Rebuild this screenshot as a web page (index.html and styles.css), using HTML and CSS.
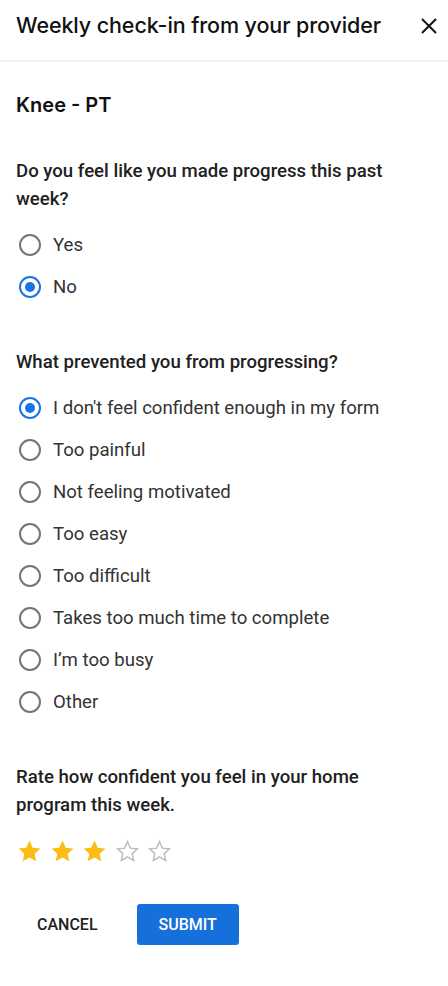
FILE: index.html
```html
<!DOCTYPE html>
<html lang="en">
<head>
    <meta charset="UTF-8">
    <meta name="viewport" content="width=device-width, initial-scale=1.0">
    <title>Weekly check-in</title>
    <link rel="stylesheet" href="styles.css">
</head>
<body>
    <div class="dialog">
        <div class="dialog-header">
            <h1 class="dialog-title">Weekly check-in from your provider</h1>
            <button class="close-button" aria-label="Close">
                <svg width="18" height="18" viewBox="0 0 18 18">
                    <path d="M2 2L16 16M16 2L2 16" stroke="#111" stroke-width="2" fill="none"/>
                </svg>
            </button>
        </div>

        <form class="dialog-body">
            <h2 class="program-name">Knee - PT</h2>

            <div class="question">
                <p class="question-text">Do you feel like you made progress this past week?</p>
                <label class="option"><input type="radio" name="progress"> Yes</label>
                <label class="option"><input type="radio" name="progress" checked> No</label>
            </div>

            <div class="question">
                <p class="question-text">What prevented you from progressing?</p>
                <label class="option"><input type="radio" name="reason" checked> I don't feel confident enough in my form</label>
                <label class="option"><input type="radio" name="reason"> Too painful</label>
                <label class="option"><input type="radio" name="reason"> Not feeling motivated</label>
                <label class="option"><input type="radio" name="reason"> Too easy</label>
                <label class="option"><input type="radio" name="reason"> Too difficult</label>
                <label class="option"><input type="radio" name="reason"> Takes too much time to complete</label>
                <label class="option"><input type="radio" name="reason"> I&rsquo;m too busy</label>
                <label class="option"><input type="radio" name="reason"> Other</label>
            </div>

            <div class="question">
                <p class="question-text">Rate how confident you feel in your home program this week.</p>
                <div class="stars">
                    <svg class="star filled" viewBox="0 0 24 24"><polygon points="12,1.5 15.1,8.3 22.5,9.1 17,14.1 18.5,21.4 12,17.7 5.5,21.4 7,14.1 1.5,9.1 8.9,8.3"/></svg>
                    <svg class="star filled" viewBox="0 0 24 24"><polygon points="12,1.5 15.1,8.3 22.5,9.1 17,14.1 18.5,21.4 12,17.7 5.5,21.4 7,14.1 1.5,9.1 8.9,8.3"/></svg>
                    <svg class="star filled" viewBox="0 0 24 24"><polygon points="12,1.5 15.1,8.3 22.5,9.1 17,14.1 18.5,21.4 12,17.7 5.5,21.4 7,14.1 1.5,9.1 8.9,8.3"/></svg>
                    <svg class="star empty" viewBox="0 0 24 24"><polygon points="12,2.5 14.8,8.8 21.5,9.5 16.5,14 17.9,20.6 12,17.2 6.1,20.6 7.5,14 2.5,9.5 9.2,8.8"/></svg>
                    <svg class="star empty" viewBox="0 0 24 24"><polygon points="12,2.5 14.8,8.8 21.5,9.5 16.5,14 17.9,20.6 12,17.2 6.1,20.6 7.5,14 2.5,9.5 9.2,8.8"/></svg>
                </div>
            </div>

            <div class="actions">
                <button type="button" class="cancel-button">Cancel</button>
                <button type="submit" class="submit-button">Submit</button>
            </div>
        </form>
    </div>
</body>
</html>
```

FILE: styles.css
```css
body {
    margin: 0;
    padding: 0;
    background-color: #fff;
    font-family: Roboto, 'Liberation Sans', sans-serif;
    color: #212121;
}
.dialog {
    width: 448px;
}
.dialog-header {
    display: flex;
    align-items: flex-start;
    justify-content: space-between;
    height: 62px;
    padding: 11px 5px 0 16px;
    border-bottom: 2px solid #f2f2f2;
    box-sizing: border-box;
}
.dialog-title {
    margin: 0;
    font-family: Inter, 'Noto Sans', sans-serif;
    font-size: 21.5px;
    font-weight: 500;
    line-height: 28px;
    letter-spacing: -0.1px;
    color: #111;
}
.close-button {
    display: flex;
    align-items: center;
    justify-content: center;
    width: 28px;
    height: 28px;
    margin-top: 1px;
    padding: 0;
    border: none;
    background: none;
    cursor: pointer;
}
.dialog-body {
    padding: 29px 16px 0 16px;
}
.program-name {
    margin: 0 0 38px 0;
    font-family: Inter, 'Noto Sans', sans-serif;
    font-size: 20px;
    font-weight: 600;
    line-height: 28px;
    color: #111;
}
.question {
    margin-bottom: 40px;
}
.question-text {
    margin: 0 0 11px 0;
    font-size: 18.6px;
    font-weight: 500;
    line-height: 28px;
    color: #212121;
}
.option {
    display: flex;
    align-items: center;
    height: 42px;
    font-size: 18.6px;
    color: #333;
    cursor: pointer;
}
.option input {
    appearance: none;
    -webkit-appearance: none;
    width: 22px;
    height: 22px;
    margin: 0 12px 0 3px;
    border: 2px solid #757575;
    border-radius: 50%;
    box-sizing: border-box;
    display: grid;
    place-items: center;
    flex-shrink: 0;
}
.option input:checked {
    border-color: #1a73e8;
}
.option input:checked::after {
    content: "";
    width: 10px;
    height: 10px;
    border-radius: 50%;
    background-color: #1a73e8;
}
.stars {
    display: flex;
    gap: 7.5px;
    padding-top: 9px;
    padding-left: 1px;
}
.star {
    width: 25px;
    height: 25px;
}
.star.filled {
    fill: #fbbd13;
}
.star.empty {
    fill: none;
    stroke: #bdbdbd;
    stroke-width: 1.4;
}
.actions {
    display: flex;
    align-items: center;
    gap: 23px;
    padding-left: 5px;
}
.cancel-button,
.submit-button {
    font-family: Roboto, 'Liberation Sans', sans-serif;
    font-size: 16px;
    font-weight: 500;
    text-transform: uppercase;
    height: 41px;
    border: none;
    border-radius: 3px;
    cursor: pointer;
}
.cancel-button {
    padding: 0 16px;
    background: none;
    color: #212121;
}
.submit-button {
    padding: 0 22px;
    background-color: #1570dc;
    color: #fff;
}
```
